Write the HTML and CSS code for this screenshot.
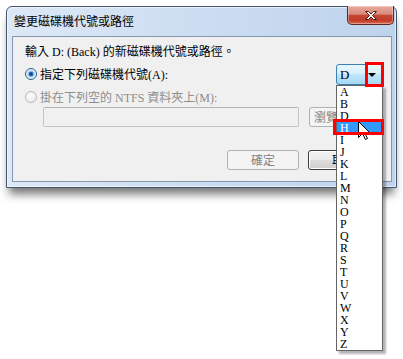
FILE: index.html
```html
<!DOCTYPE html>
<html lang="zh-Hant">
<head>
  <meta charset="UTF-8" />
  <meta name="viewport" content="width=device-width, initial-scale=1.0"/>
  <title>變更磁碟機代號或路徑</title>
  <link rel="stylesheet" href="styles.css">
</head>
<body>
  <div class="desktop">
    <div class="window">
      <div class="titlebar">
        <span class="title">變更磁碟機代號或路徑</span>
        <span class="close">
          <svg width="14" height="11" viewBox="0 0 14 11">
            <path d="M1.5 1.5h3l2.5 2.6 2.5-2.6h3l-4 4 4 4h-3L7 6.9 4.5 9.5h-3l4-4z" fill="#fff" stroke="#4a1c16" stroke-width="1"/>
          </svg>
        </span>
      </div>

      <div class="client">
        <p class="prompt">輸入 D: (Back) 的新磁碟機代號或路徑。</p>

        <div class="row">
          <span class="radio checked"></span>
          <span class="label">指定下列磁碟機代號(A):</span>
          <div class="combo">
            <span class="combo-value">D</span>
            <span class="combo-arrow"></span>
            <ul class="droplist">
              <li>A</li>
              <li>B</li>
              <li>D</li>
              <li class="selected">H</li>
              <li>I</li>
              <li>J</li>
              <li>K</li>
              <li>L</li>
              <li>M</li>
              <li>N</li>
              <li>O</li>
              <li>P</li>
              <li>Q</li>
              <li>R</li>
              <li>S</li>
              <li>T</li>
              <li>U</li>
              <li>V</li>
              <li>W</li>
              <li>X</li>
              <li>Y</li>
              <li>Z</li>
            </ul>
          </div>
        </div>

        <div class="row second disabled">
          <span class="radio"></span>
          <span class="label">掛在下列空的 NTFS 資料夾上(M):</span>
        </div>

        <div class="path-row">
          <div class="path-input"></div>
          <button class="btn browse" disabled>瀏覽...</button>
        </div>

        <div class="actions">
          <button class="btn" disabled>確定</button>
          <button class="btn default">取消</button>
        </div>
      </div>
    </div>

    <!-- pointer and red highlight marks drawn over the screenshot -->
    <svg class="cursor" width="13" height="20" viewBox="0 0 13 20">
      <path d="M0.5 0.5V16.5L4.5 12.5L7.5 18.5L9.5 17.5L6.5 11.5H11.5Z" fill="#fff" stroke="#000" stroke-width="1"/>
    </svg>
    <div class="mark mark-arrow"></div>
    <div class="mark mark-item"></div>
  </div>
</body>
</html>
```

FILE: styles.css
```css
* {
  margin: 0;
  padding: 0;
  box-sizing: border-box;
}

body {
  background: #fff;
  font-family: "Liberation Serif", "Noto Sans CJK TC", serif;
  font-size: 12px;
  color: #000;
}

.desktop {
  position: relative;
  width: 403px;
  height: 359px;
  overflow: hidden;
  background: #fff;
}

.window {
  margin: 6px 0 0 6px;
  width: 391px;
  height: 182px;
  border: 1px solid #45566b;
  border-radius: 6px 6px 0 0;
  background: linear-gradient(to right, #dde8f6 0%, #cfdff2 40%, #bed3ec 100%);
  box-shadow: inset 0 0 0 1px rgba(255, 255, 255, 0.55), 0 9px 10px -3px rgba(0, 0, 0, 0.55);
}

.titlebar {
  display: flex;
  height: 29px;
}

.title {
  padding: 7px 0 0 7px;
  line-height: 16px;
  color: #000;
}

.close {
  display: flex;
  align-items: center;
  justify-content: center;
  margin: -1px 2px 0 auto;
  width: 47px;
  height: 19px;
  border: 1px solid #5a2820;
  border-top: none;
  border-radius: 0 0 5px 5px;
  background: linear-gradient(#e7a99c 0%, #d88b7c 45%, #c54634 52%, #c13c28 80%, #d9694f 100%);
  box-shadow: inset 0 0 0 1px rgba(255, 255, 255, 0.35);
}

.client {
  margin: 0 4px 0 5px;
  height: 146px;
  border: 1px solid #8397b1;
  background: #f0f0f0;
  padding: 7px 0 0 12px;
}

.prompt {
  line-height: 16px;
}

.row {
  display: flex;
  align-items: center;
  height: 16px;
  margin-top: 6px;
}

.row.second {
  margin-top: 7px;
}

.row.disabled .label {
  color: #8d8d8d;
}

.radio {
  width: 12px;
  height: 12px;
  margin-right: 3px;
  border-radius: 50%;
  border: 1px solid #b9b9b9;
  background: radial-gradient(circle at 40% 35%, #fcfcfc, #e6e6e6);
}

.radio.checked {
  border-color: #2f5f8c;
  background: radial-gradient(circle, #0e3a73 0%, #1f6bbd 28%, #7fb6e6 34%, #eef4fa 60%, #d3dde8 100%);
}

.combo {
  position: relative;
  z-index: 5;
  align-self: flex-start;
  display: flex;
  align-items: center;
  margin: -2px 8px 0 auto;
  width: 47px;
  height: 21px;
  border: 1px solid #3c7fb1;
  border-radius: 3px;
  background: linear-gradient(#eaf6fd 0%, #d9f0fc 45%, #bee6fd 50%, #a7d9f5 100%);
}

.combo-value {
  padding-left: 3px;
  font-size: 13px;
  line-height: 16px;
}

.combo-arrow {
  margin: 1px 6px 0 auto;
  border-left: 4px solid transparent;
  border-right: 4px solid transparent;
  border-top: 4px solid #000;
}

.droplist {
  position: absolute;
  top: 20px;
  left: -1px;
  width: 47px;
  list-style: none;
  border: 1px solid #646464;
  background: #fff;
  box-shadow: 3px 3px 2px rgba(0, 0, 0, 0.3);
}

.droplist li {
  height: 12px;
  padding-left: 3px;
  font-size: 12px;
  line-height: 12px;
}

.droplist li.selected {
  background: #3399ff;
  color: #fff;
}

.path-row {
  display: flex;
  gap: 10px;
  margin-top: 2px;
  padding-left: 18px;
}

.path-input {
  width: 256px;
  height: 20px;
  border: 1px solid #c5c5c5;
  border-top-color: #b5b5b5;
  border-radius: 2px;
  background: #f0f0f0;
}

.btn {
  width: 72px;
  height: 20px;
  border: 1px solid #707070;
  border-radius: 3px;
  background: linear-gradient(#f2f2f2 0%, #ebebeb 50%, #dddddd 51%, #cfcfcf 100%);
  font-family: "Noto Sans CJK TC", sans-serif;
  font-size: 12px;
  line-height: 16px;
  color: #000;
}

.btn.browse {
  width: 44px;
}

.btn:disabled {
  border-color: #adb2b5;
  background: #f4f4f4;
  color: #838383;
}

.btn.default {
  border-color: #3c3c3c;
  box-shadow: inset 0 0 0 1px #fff;
}

.actions {
  display: flex;
  justify-content: flex-end;
  gap: 9px;
  margin-top: 23px;
  padding-right: 11px;
}

.cursor {
  position: absolute;
  left: 358px;
  top: 121px;
  z-index: 8;
}

.mark {
  position: absolute;
  z-index: 9;
  border: 3px solid #ff0000;
}

.mark-arrow {
  left: 365px;
  top: 62px;
  width: 19px;
  height: 25px;
}

.mark-item {
  left: 333px;
  top: 119px;
  width: 51px;
  height: 16px;
}
```
